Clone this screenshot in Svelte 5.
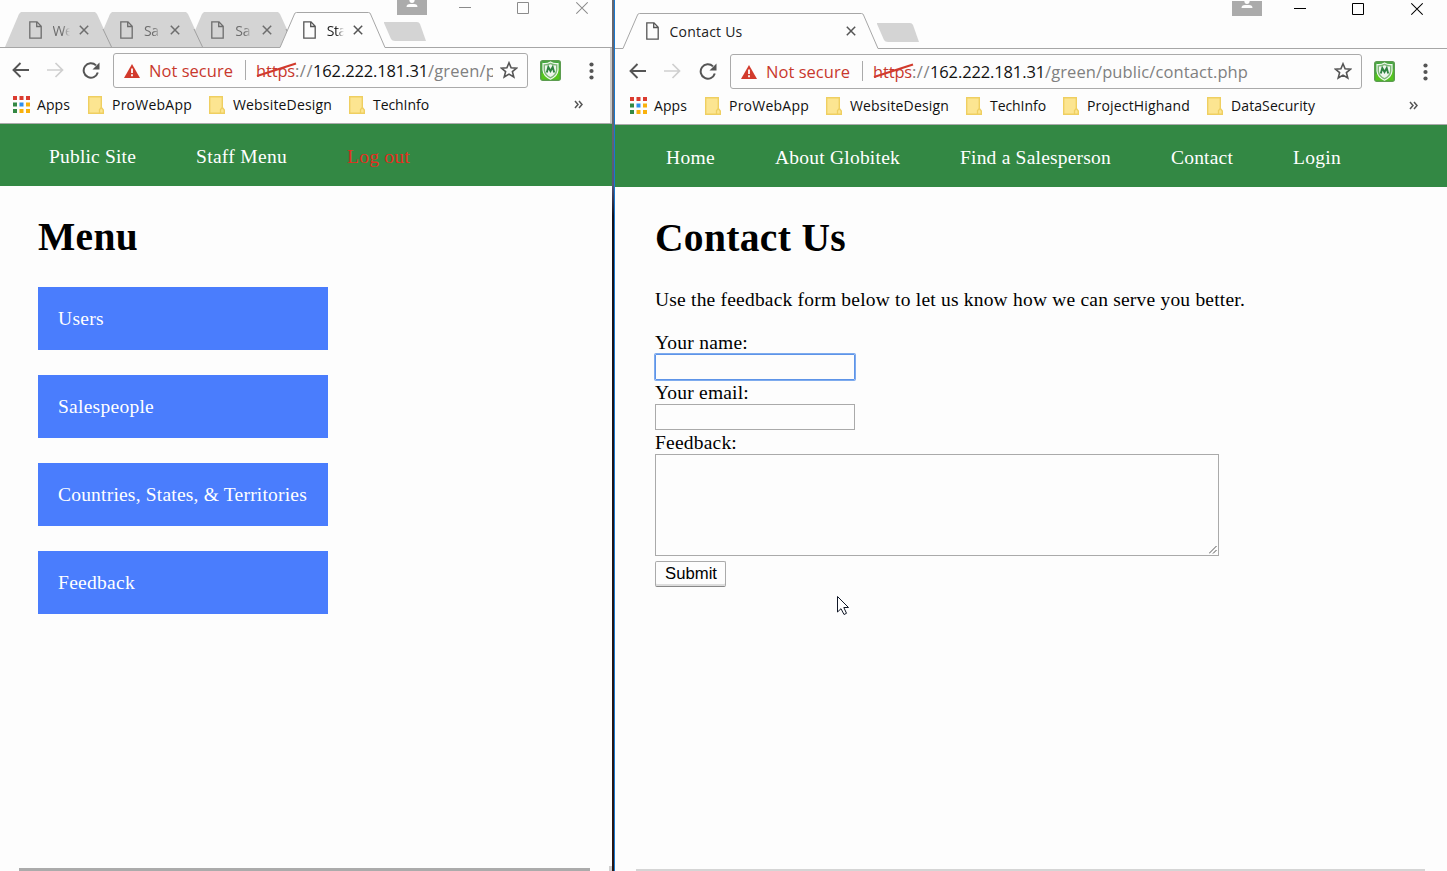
<script>
  const windows = [
    {
      id: 'staff',
      tabs: [
        { title: 'We', w: 20, active: false },
        { title: 'Sa', w: 15, active: false },
        { title: 'Sa', w: 15, active: false },
        { title: 'Sta', w: 19, active: true }
      ],
      tabWidth: 107,
      path: '/green/p',
      pathW: 68,
      bookmarks: [['ProWebApp', 80], ['WebsiteDesign', 99], ['TechInfo', 56]],
      nav: [['Public Site', 87], ['Staff Menu', 91], ['Log out', 63]]
    },
    {
      id: 'public',
      tabs: [{ title: 'Contact Us', w: 73, active: true }],
      tabWidth: 257,
      path: '/green/public/contact.php',
      pathW: 203,
      bookmarks: [['ProWebApp', 80], ['WebsiteDesign', 99], ['TechInfo', 56], ['ProjectHighand', 103], ['DataSecurity', 84]],
      nav: [['Home', 49], ['About Globitek', 125], ['Find a Salesperson', 151], ['Contact', 62], ['Login', 48]]
    }
  ];
  const menu = [['Users', 46], ['Salespeople', 96], ['Countries, States, & Territories', 249], ['Feedback', 77]];
  const dots = ['#db3b2f', '#db3b2f', '#db3b2f', '#338844', '#2f8fee', '#f9b10c', '#338844', '#f9b10c', '#f9b10c'];

  // Spreads a label's letters so that it takes the given width.
  function fit(node, width) {
    const apply = () => {
      node.style.letterSpacing = '0px';
      const natural = node.getBoundingClientRect().width;
      node.style.letterSpacing = (width - natural) / node.textContent.length + 'px';
    };
    apply();
    document.fonts.ready.then(apply);
  }
</script>

<div class="desktop">
  {#each windows as win}
    <section class="window {win.id}">
      <div class="strip">
        {#each win.tabs as tab, i}
          <div class="tab" class:active={tab.active} style="width:{win.tabWidth}px; z-index:{tab.active ? 9 : 5 - i}">
            <svg class="shape" width={win.tabWidth} height="36">
              {#if tab.active}
                <path d="M0 36V35.5L1 35.5L15.5 2Q16 .5 17.5 .5H{win.tabWidth - 17.5}Q{win.tabWidth - 16} .5 {win.tabWidth - 15.5} 2L{win.tabWidth - 1} 35.5V36Z" fill="#fdfdfd" />
                <path d="M0 35.5H1L15.5 2Q16 .5 17.5 .5H{win.tabWidth - 17.5}Q{win.tabWidth - 16} .5 {win.tabWidth - 15.5} 2L{win.tabWidth - 1} 35.5" fill="none" stroke="#a6a6a6" />
              {:else}
                <path d="M0 35L14 2L16 0H{win.tabWidth - 17}L{win.tabWidth - 15} 2L{win.tabWidth} 35Z" fill="#d4d4d4" />
                <path d="M{win.tabWidth - 9} 17L{win.tabWidth - .5} 35" fill="none" stroke="#a0a0a0" />
              {/if}
            </svg>
            <svg class="page-icon" width="13" height="18" viewBox="0 0 13 18" fill="none" stroke="currentColor" stroke-width="1.3">
              <path d="M.8 .8H8L12.2 5.2V17.2H.8ZM7.7 1V5.5H12" />
            </svg>
            <span class="title"><span use:fit={tab.w}>{tab.title}</span></span>
            <svg class="close" width="10" height="10" viewBox="0 0 10 10" stroke="currentColor" stroke-width="1.5">
              <path d="M.8 .8L9.2 9.2M9.2 .8L.8 9.2" />
            </svg>
          </div>
        {/each}
        <svg class="newtab" width="44" height="20"><path d="M1 0H34Q36 0 37 2L43 19H12Q9 19 8 17L1 1Z" fill="#d4d4d4" /></svg>
        <div class="controls">
          <svg width="30" height="15"><path d="M0 0H30V15H0Z" fill="#ababab" /><path d="M12.3 0Q12.5 3 15 3Q17.500 3 17.700 0ZM9.500 7Q9.500 4 13 4H17Q20.500 4 20.500 7Z" fill="#fdfdfd" /></svg>
          <svg class="min" width="12" height="15"><path d="M0 7.500H12" stroke="currentColor" /></svg>
          <svg class="max" width="12" height="15"><path d="M.5 2.500H11.500V13.500H.5Z" fill="none" stroke="currentColor" /></svg>
          <svg class="x" width="12" height="15"><path d="M.3 2.300L11.700 13.700M11.700 2.300L.3 13.700" stroke="currentColor" stroke-width="1.100" /></svg>
        </div>
      </div>

      <div class="toolbar">
        <svg class="back" width="17" height="16" fill="none" stroke="#555" stroke-width="1.900"><path d="M17 8H1.500M8.500 1L1.500 8L8.500 15" /></svg>
        <svg class="forward" width="17" height="16" fill="none" stroke="#cfcfcf" stroke-width="1.700"><path d="M0 8H15.500M8.500 1L15.500 8L8.500 15" /></svg>
        <svg class="reload" width="18" height="17" fill="none" stroke="#555" stroke-width="2"><path d="M15.800 10.500A7.200 7.200 0 1 1 14 3.400" /><path d="M17.500 .5V7.500H10.500Z" fill="#555" stroke="none" /></svg>
        <div class="omnibox">
          <svg class="warn" width="16" height="14"><path d="M8 0L16 14H0Z" fill="#d23a2c" /><path d="M7.100 4.500H8.900V9H7.100ZM7.100 10.300H8.900V12.200H7.100Z" fill="#fdfdfd" /></svg>
          <span class="notsecure" use:fit={84}>Not secure</span>
          <i class="sep"></i>
          <span class="url">
            <span class="https"><span use:fit={39}>https</span><svg class="strike" width="42" height="16"><path d="M1 14L40 1.500" stroke="#d23a2c" stroke-width="2.200" /></svg></span><span class="dim" use:fit={18}>://</span><span class="host" use:fit={115}>162.222.181.31</span><span class="dim" use:fit={win.pathW}>{win.path}</span>
          </span>
          <svg class="star" width="18" height="18" viewBox="0 0 18 18" fill="none" stroke="#555" stroke-width="1.600"><path d="M9 1.800L11.100 6.700L16.600 7.100L12.400 10.600L13.800 16L9 13.100L4.200 16L5.600 10.600L1.400 7.100L6.900 6.700Z" /></svg>
        </div>
        <svg class="shield" width="21" height="21" viewBox="0 0 21 21">
          <rect x=".7" y=".7" width="19.600" height="19.600" rx="2" fill="#3fa83a" stroke="#5c9c50" stroke-width="1.400" />
          <path d="M1.500 13L19.500 8V19.500H1.500Z" fill="#55c51d" />
          <path d="M3 3.500Q7 4 10.500 2Q14 4 18 3.500V10Q17.500 16 10.500 19.200Q3.500 16 3 10Z" fill="#7db877" stroke="#f1f8ef" stroke-width="1.200" />
          <path d="M5 5.500Q8 5.600 10.500 4.300Q13 5.600 16 5.500V10Q15.500 14.500 10.500 17Q5.500 14.500 5 10Z" fill="#eef5ec" />
          <path d="M6.800 12.500L8.300 7L10.500 11L12.700 7L14.200 12.500" fill="none" stroke="#2f8240" stroke-width="1.900" />
        </svg>
        <svg class="more" width="5" height="18" fill="#555"><circle cx="2.500" cy="2.500" r="2.100" /><circle cx="2.500" cy="9" r="2.100" /><circle cx="2.500" cy="15.500" r="2.100" /></svg>
      </div>

      <div class="bookmarks">
        <svg class="apps" width="17" height="17">
          {#each dots as color, i}<rect x={(i % 3) * 6.500} y={Math.floor(i / 3) * 6.500} width="4" height="4" fill={color} />{/each}
        </svg>
        <span class="appslabel" use:fit={33}>Apps</span>
        {#each win.bookmarks as [name, w]}
          <span class="bookmark">
            <svg width="16" height="18"><path d="M.7 .7H13.300V11.500L15.300 14V17.300H.7Z" fill="#fce591" stroke="#efcf61" stroke-width="1.400" /><path d="M11.500 17V13.500L13.500 11.500" fill="none" stroke="#efcf61" stroke-width="1.300" /></svg>
            <span use:fit={w}>{name}</span>
          </span>
        {/each}
        <svg class="chev" width="9" height="9" fill="none" stroke="#555" stroke-width="1.500"><path d="M1 1L4 4.500L1 8M5 1L8 4.500L5 8" /></svg>
      </div>

      <nav>
        {#each win.nav as [label, w]}<span class:logout={label === 'Log out'} use:fit={w}>{label}</span>{/each}
      </nav>

      <main>
        {#if win.id === 'staff'}
          <h1><span use:fit={100}>Menu</span></h1>
          <div class="menu">
            {#each menu as [label, w]}<div class="item"><span use:fit={w}>{label}</span></div>{/each}
          </div>
        {:else}
          <h1><span use:fit={191}>Contact Us</span></h1>
          <p><span use:fit={590}>Use the feedback form below to let us know how we can serve you better.</span></p>
          <div class="form">
            <div class="label"><span use:fit={93}>Your name:</span></div>
            <div class="field focused"></div>
            <div class="label"><span use:fit={94}>Your email:</span></div>
            <div class="field"></div>
            <div class="label"><span use:fit={82}>Feedback:</span></div>
            <div class="area"><svg width="8" height="8" stroke="#555"><path d="M0 7.500L7.500 0M4 7.500L7.500 4" /></svg></div>
            <div class="submit"><span use:fit={52}>Submit</span></div>
          </div>
        {/if}
      </main>
      <div class="bottombar"></div>
    </section>
    {#if win.id === 'staff'}<div class="divider"></div>{/if}
  {/each}
  <svg class="cursor" width="14" height="21"><path d="M1.500 1.500V17L5 13.700L8 19.500L10.500 18.300L7.800 12.500H12.500Z" fill="#fff" stroke="#111827" /></svg>
</div>

<style>
  :global(body) { margin: 0; background: #fdfdfd; overflow: hidden; }
  .desktop { position: relative; display: flex; width: 1447px; height: 871px; overflow: hidden; font: 14px/20px "Open Sans", sans-serif; color: #111; }
  svg { display: block; flex: none; }
  span { white-space: nowrap; }
  .window { display: flex; flex-direction: column; box-sizing: border-box; height: 871px; overflow: hidden; background: #fdfdfd; }
  .staff { width: 612px; background: linear-gradient(#c8c8c8, #c8c8c8) 610px 48px / 2px 76px no-repeat, linear-gradient(#d0d0d0, #d0d0d0) 609px 866px / 3px 5px no-repeat, #fdfdfd; }
  .public { width: 832px; padding-top: 1px; }
  .public > div, .public nav, .public main { padding-left: 2px; }
  .divider { width: 3px; background: linear-gradient(90deg, transparent 2px, #1979cf 2px), linear-gradient(#66666f 0 130px, #55557a 185px, #15121c 216px, #2a1614); }

  .strip { display: flex; height: 48px; box-sizing: border-box; padding-top: 12px; background: linear-gradient(#a6a6a6, #a6a6a6) 0 47px / 100% 1px no-repeat; flex: none; }
  .tab { position: relative; display: flex; height: 36px; box-sizing: border-box; padding: 9px 18px 0 23.500px; margin-right: -15.600px; flex: none; color: #6d6d6d; }
  .tab:first-child { margin-left: 5px; }
  .tab.active { color: #555; }
  .shape { position: absolute; left: 0; top: 0; }
  .page-icon { position: relative; }
  .title { position: relative; flex: 1; margin-left: 11px; overflow: hidden; height: 20px; line-height: 19px; font-size: 14px; }
  .staff .title { margin-right: 9.500px; -webkit-mask-image: linear-gradient(90deg, #000 55%, transparent); mask-image: linear-gradient(90deg, #000 55%, transparent); }
  .active .title { color: #222; }
  .close { position: relative; margin: 4px 5px 0 0; }
  .newtab { margin: 10px -44px 0 12.600px; }
  .public .newtab { margin-left: 12.600px; }
  .controls { position: relative; display: flex; margin: -12px 24px 0 auto; color: #8b8b8b; }
  .public .controls { color: #000; }
  .min { margin-left: 32px; }
  .max { margin-left: 46px; }
  .x { margin-left: 47px; }

  .toolbar { display: flex; align-items: center; height: 46px; flex: none; box-sizing: border-box; padding-bottom: 2px; }
  .back { margin-left: 12px; }
  .forward { margin-left: 18px; }
  .reload { margin-left: 18px; }
  .omnibox { display: flex; align-items: center; flex: 1; min-width: 0; height: 35px; box-sizing: border-box; border: 1px solid #aaa; border-radius: 3px; margin-left: 13px; padding: 0 9px 0 10px; font-size: 16.500px; line-height: 33px; }
  .warn { margin-top: 2px; }
  .notsecure { margin-left: 9px; color: #c8382d; }
  .sep { width: 1px; height: 20px; margin: 0 10px 0 12px; background: #aaa; flex: none; }
  .url { flex: 1; display: flex; min-width: 0; overflow: hidden; margin-right: 7px; }
  .https { position: relative; color: #c8382d; }
  .strike { position: absolute; left: 0; top: 8px; }
  .dim { color: #808080; }
  .shield { margin-left: 12px; }
  .more { margin: 2px 18px 0 28px; }
  .public .more { margin-right: 19px; }

  .bookmarks { display: flex; align-items: center; height: 30px; flex: none; box-sizing: border-box; padding-bottom: 8px; border-bottom: 1px solid #aaa; }
  .apps { margin-left: 12.500px; }
  .appslabel { margin-left: 7.500px; }
  .bookmark { display: flex; align-items: center; margin-left: 18px; }
  .bookmark svg { margin-right: 8px; }
  .bookmark + .bookmark { margin-left: 17px; }
  .chev { margin: 0 29px 0 auto; }

  nav { display: flex; flex: none; gap: 60px; height: 62px; background: #338844; color: #fff; font: 19.500px/65px "Liberation Serif", serif; }
  nav span:first-child { margin-left: 49px; }
  .logout { color: #e52e20; }
  main { flex: 1; font: 19.500px/24px "Liberation Serif", serif; color: #000; }
  h1 { margin: 27px 0 0 38px; font-size: 39.500px; line-height: 48px; }
  .menu { display: grid; gap: 25px; margin: 26px 0 0 38px; width: 290px; }
  .item { height: 63px; padding-left: 20px; background: #4a7dfd; color: #fff; line-height: 64px; }
  p { margin: 26px 0 0 38px; line-height: 24px; }
  .form { display: flex; flex-direction: column; align-items: flex-start; margin: 18px 0 0 38px; }
  .label { height: 24px; line-height: 26px; }
  .field { box-sizing: border-box; width: 200px; height: 26px; border: 1px solid #aaa; }
  .focused { border-color: #5e94e8; box-shadow: 0 0 0 1px #7eabee; border-radius: 1px; }
  .area { display: flex; align-items: flex-end; justify-content: flex-end; box-sizing: border-box; width: 564px; height: 102px; border: 1px solid #aaa; padding: 1px; }
  .submit { box-sizing: border-box; width: 71px; height: 26px; margin-top: 5px; padding-left: 9px; border: 1px solid #aaa; border-bottom-color: #888; border-radius: 2px; box-shadow: inset 0 -2px #ddd; font: 16.700px/24px "Liberation Sans", sans-serif; }
  .bottombar { flex: none; height: 3px; margin-left: 19px; width: 571px; background: #ababab; }
  .public .bottombar { padding: 0; margin-left: 21px; width: 789px; height: 2px; background: #d5d5d5; }
  .cursor { position: absolute; left: 836px; top: 595px; }
</style>
